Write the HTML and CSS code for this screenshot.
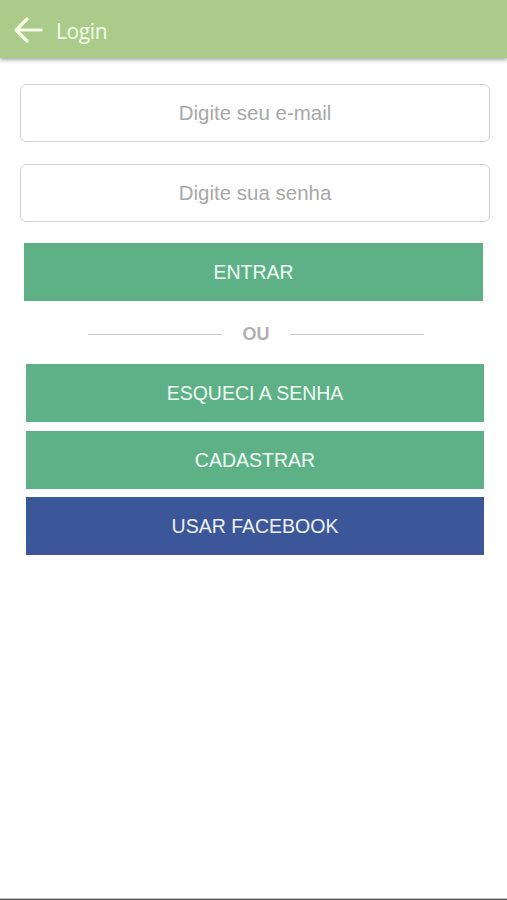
FILE: index.html
```
<!DOCTYPE html>
<html lang="pt">
<head>
<meta charset="utf-8">
<title>Login</title>
<link rel="stylesheet" href="styles.css">
</head>
<body>
<header class="topbar">
  <svg class="back" width="30" height="28" viewBox="0 0 30 28" aria-hidden="true">
    <path d="M28 14H4M14 3L3 14l11 11" fill="none" stroke="#f4ffe6" stroke-width="3.2" stroke-linecap="round" stroke-linejoin="round"/>
  </svg>
  <span class="title">Login</span>
</header>
<main class="content">
  <div class="field"><input class="input" type="email" placeholder="Digite seu e-mail"></div>
  <div class="field"><input class="input" type="password" placeholder="Digite sua senha"></div>
  <button class="btn btn-green btn-enter">ENTRAR</button>
  <div class="divider"><span class="line"></span><span class="ou">OU</span><span class="line"></span></div>
  <div class="stack">
    <button class="btn btn-green">ESQUECI A SENHA</button>
    <button class="btn btn-green">CADASTRAR</button>
    <button class="btn btn-fb">USAR FACEBOOK</button>
  </div>
</main>
<div class="bottombar"></div>
</body>
</html>
```
FILE: styles.css
```
* { box-sizing: border-box; }
html, body { margin: 0; padding: 0; }
body {
  width: 507px;
  height: 900px;
  background: #fff;
  font-family: "Liberation Sans", Arial, sans-serif;
  position: relative;
  overflow: hidden;
}
.topbar {
  height: 58px;
  background: #abcb8b;
  display: flex;
  align-items: center;
  padding-left: 13px;
  box-shadow: 0 2px 4px rgba(0,0,0,0.35);
  position: relative;
  z-index: 1;
}
.back { margin-top: 2px; }
.title {
  margin-left: 13px;
  margin-top: 3px;
  color: #f4ffe6;
  font-family: "Open Sans", "Liberation Sans", sans-serif;
  font-size: 21px;
  letter-spacing: -0.4px;
}
.content {
  padding: 26px 17px 0 20px;
  display: flex;
  flex-direction: column;
}
.field { margin-bottom: 22px; }
.field + .field { margin-bottom: 21px; }
.input {
  display: block;
  width: 470px;
  height: 58px;
  border: 1.5px solid #d2d2d2;
  border-radius: 6px;
  background: #fff;
  text-align: center;
  font-family: "Liberation Sans", Arial, sans-serif;
  font-size: 20.5px;
  color: #555;
  outline: none;
}
.input::placeholder { color: #a8a8a8; }
.btn {
  display: block;
  height: 58px;
  border: none;
  font-family: "Liberation Sans", Arial, sans-serif;
  font-size: 19.5px;
  padding: 0;
  text-align: center;
}
.btn-green { background: #5eb187; color: #eefef3; }
.btn-fb { background: #3b5799; color: #eef1fb; }
.btn-enter { width: 459px; margin-left: 4px; }
.divider {
  display: flex;
  align-items: center;
  justify-content: center;
  height: 63px;
  padding-top: 3px;
  gap: 19px;
  margin-left: 2px;
}
.line { width: 134px; height: 1px; background: #c9c9c9; }
.ou {
  color: #b0b0b0;
  font-size: 18px;
  font-weight: bold;
  width: 30px;
  text-align: center;
}
.stack {
  display: flex;
  flex-direction: column;
  gap: 9px;
  margin-left: 6px;
  width: 458px;
}
.stack .btn { width: 458px; }
.stack .btn-fb { margin-top: -1px; }
.bottombar {
  position: absolute;
  left: 0; right: 0; bottom: 0;
  height: 2px;
  background: #5a5a5a;
  border-top: 1px solid #bbb;
}
```
